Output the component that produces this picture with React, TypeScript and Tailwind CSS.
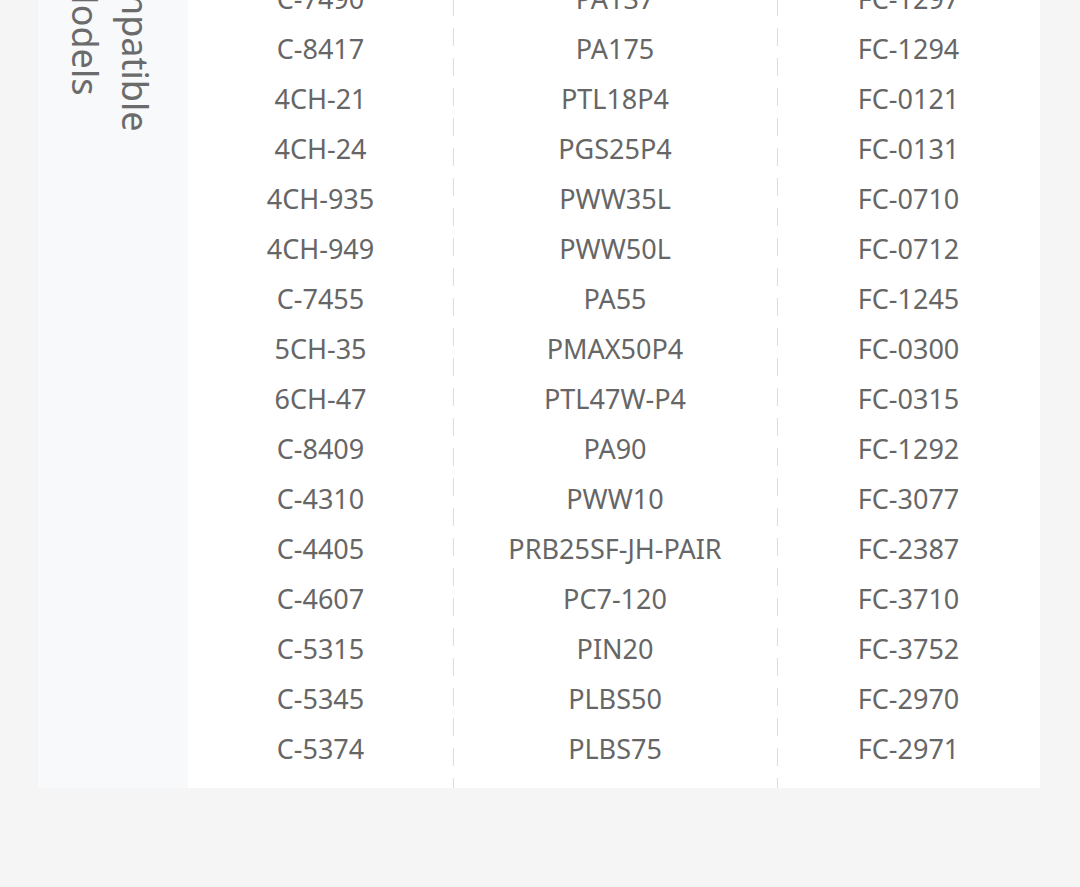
const rows: [string, string, string][] = [
  ["C-7490", "PA137", "FC-1297"],
  ["C-8417", "PA175", "FC-1294"],
  ["4CH-21", "PTL18P4", "FC-0121"],
  ["4CH-24", "PGS25P4", "FC-0131"],
  ["4CH-935", "PWW35L", "FC-0710"],
  ["4CH-949", "PWW50L", "FC-0712"],
  ["C-7455", "PA55", "FC-1245"],
  ["5CH-35", "PMAX50P4", "FC-0300"],
  ["6CH-47", "PTL47W-P4", "FC-0315"],
  ["C-8409", "PA90", "FC-1292"],
  ["C-4310", "PWW10", "FC-3077"],
  ["C-4405", "PRB25SF-JH-PAIR", "FC-2387"],
  ["C-4607", "PC7-120", "FC-3710"],
  ["C-5315", "PIN20", "FC-3752"],
  ["C-5345", "PLBS50", "FC-2970"],
  ["C-5374", "PLBS75", "FC-2971"],
];

const dashed =
  "bg-[linear-gradient(#d8dcee_18px,transparent_18px)] bg-[length:1px_30px] bg-[position:0_24px] bg-repeat-y";

function Column({ items, className = "" }: { items: string[]; className?: string }) {
  return (
    <div className={`flex flex-col pb-[14px] ${className}`}>
      {items.map((t) => (
        <div key={t} className="h-[50px] text-center leading-[50px] whitespace-nowrap">
          {t}
        </div>
      ))}
    </div>
  );
}

export default function App() {
  return (
    <div className="h-[887px] overflow-hidden bg-[#f5f5f5] font-['Noto_Sans','Open_Sans',sans-serif]">
      {/* table card, scrolled so the first row is half hidden */}
      <div className="-mt-[26px] ml-[38px] grid w-[1002px] grid-cols-[150px_265px_324px_263px] bg-white text-[27px] text-[#666]">
        <div className="flex justify-center bg-[#f8f9fb]">
          <div className="-mt-[60px] h-[240px] pr-[6px] text-center text-[36px] leading-[50px] text-[#6b6b6b] [writing-mode:vertical-rl]">
            Compatible Models
          </div>
        </div>
        <Column items={rows.map((r) => r[0])} />
        <Column items={rows.map((r) => r[1])} className={dashed} />
        <Column items={rows.map((r) => r[2])} className={dashed} />
      </div>
    </div>
  );
}
